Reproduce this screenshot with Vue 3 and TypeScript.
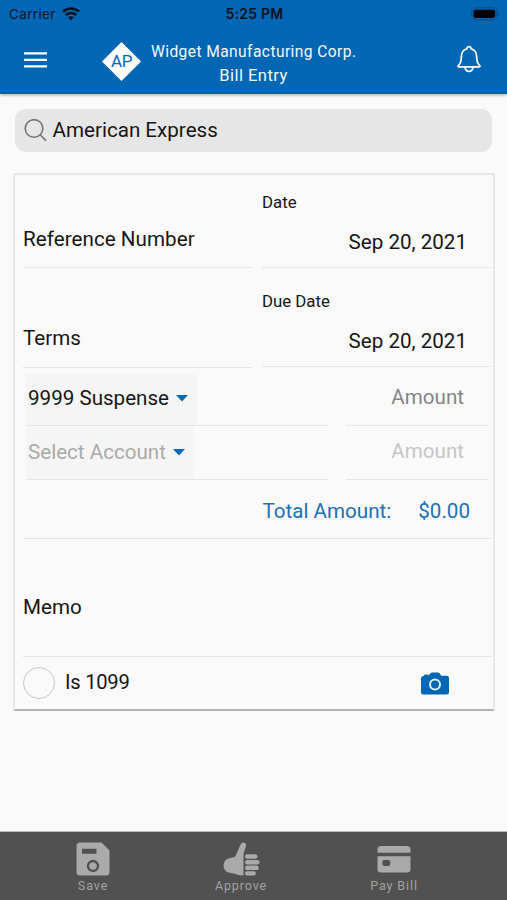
<script setup lang="ts">
import { ref } from 'vue'

interface AccountLine {
  account: string
  filled: boolean
}

const company = 'Widget Manufacturing Corp.'
const vendor = ref('American Express')
const billDate = ref('Sep 20, 2021')
const dueDate = ref('Sep 20, 2021')
const is1099 = ref(false)
const lines = ref<AccountLine[]>([
  { account: '9999 Suspense', filled: true },
  { account: 'Select Account', filled: false },
])
const total = ref('$0.00')
</script>

<template>
  <div class="screen">
    <header class="header">
      <div class="status">
        <div class="carrier">
          <span>Carrier</span>
          <svg class="wifi" width="18" height="14" viewBox="0 0 18 14">
            <path d="M1 4.600C5.400.4 12.600.4 17 4.600" />
            <path d="M3.800 8c2.900-2.700 7.500-2.700 10.400 0" />
            <path class="dot" d="M6.200 10.400c1.500-1.400 4.100-1.400 5.600 0L9 13.200z" />
          </svg>
        </div>
        <span class="clock">5:25 PM</span>
        <svg class="battery" width="29" height="14" viewBox="0 0 29 14">
          <rect class="case" x="0.8" y="0.8" width="25" height="12" rx="3.6" />
          <rect x="2.6" y="2.7" width="21.6" height="8.3" rx="2" />
          <path class="tip" d="M27.2 5v4c1.600-.7 1.600-3.300 0-4z" />
        </svg>
      </div>
      <div class="bar">
        <svg class="menu" width="23" height="16" viewBox="0 0 23 16">
          <path d="M0 1.300h23M0 7.900h23M0 14.400h23" />
        </svg>
        <div class="brand"><span>AP</span></div>
        <div class="titles">
          <div class="company">{{ company }}</div>
          <div class="page">Bill Entry</div>
        </div>
        <svg class="bell" width="26" height="28" viewBox="0 0 26 28">
          <path d="M11 3.700C11 1 15 1 15 3.700C18.800 4.700 20.500 7.600 20.600 11.300C20.700 16.500 21.400 18.600 23.500 20.400C24.300 21.200 24 21.900 23 21.900H3C2 21.900 1.700 21.200 2.500 20.400C4.600 18.600 5.300 16.500 5.400 11.300C5.500 7.600 7.200 4.700 11 3.700Z" />
          <path d="M9 22.200c.5 5.600 7.500 5.600 8 0" />
        </svg>
      </div>
    </header>

    <main class="content">
      <div class="search">
        <svg width="24" height="24" viewBox="0 0 24 24">
          <circle cx="10" cy="9.500" r="8.800" />
          <path d="M16.100 15.800l6 6" />
        </svg>
        <span>{{ vendor }}</span>
      </div>

      <section class="card">
        <div class="pair first">
          <div class="field"><span class="reference">Reference Number</span></div>
          <div class="field date">
            <label>Date</label>
            <span>{{ billDate }}</span>
          </div>
        </div>
        <div class="pair second">
          <div class="field"><span>Terms</span></div>
          <div class="field date">
            <label>Due Date</label>
            <span>{{ dueDate }}</span>
          </div>
        </div>

        <div v-for="line in lines" :key="line.account" class="line" :class="{ empty: !line.filled }">
          <div class="account">
            <div class="select">
              <span>{{ line.account }}</span>
              <svg width="12" height="7" viewBox="0 0 12 7"><path d="M0 0h12L6 6.500z" /></svg>
            </div>
          </div>
          <div class="amount"><span>Amount</span></div>
        </div>

        <div class="total">
          <span class="total-label">Total Amount:</span>
          <span class="total-value">{{ total }}</span>
        </div>
        <div class="memo"><span>Memo</span></div>
        <div class="options">
          <button class="check" :aria-pressed="is1099" @click="is1099 = !is1099"></button>
          <span class="check-label">Is 1099</span>
          <svg class="camera" width="28" height="23" viewBox="0 0 28 23">
            <path d="M2.800 3.800Q3 2.500 4.500 2.500H6.200Q7 2.500 7.300 3.400L8.400 2.500L9.500 1.200Q10.200.500 11.200.500H17Q18 .500 18.600 1.200L20.300 3.800H25.500Q28 3.800 28 6.300V20Q28 22.500 25.500 22.500H2.500Q0 22.500 0 20V6.300Q0 4.300 2.800 3.800Z" />
            <circle cx="14" cy="12.500" r="5" />
          </svg>
        </div>
      </section>
    </main>

    <footer class="footer">
      <div class="action save">
        <svg width="34" height="34" viewBox="0 0 34 34">
          <path fill-rule="evenodd" d="M4 .500H25.500L33.500 8.500V30Q33.500 33.500 30 33.500H4Q.500 33.500 .500 30V4Q.500 .500 4 .500ZM6 6.700V11.700H20.500V6.700ZM17 17.800a6.200 6.200 0 1 0 .01 0ZM17 20.200a3.800 3.800 0 1 1-.01 0Z" />
        </svg>
        <span>Save</span>
      </div>
      <div class="action approve">
        <svg width="37" height="34" viewBox="0 0 37 34">
          <path d="M9 15.500Q11.700 15.500 12.500 14L17.600 2.500Q19.200-.600 22 1.100Q23.700 2.300 22.600 5.200L20.500 12V33.500Q15 33.500 11.500 31.700L5.500 30.500Q.500 28.700 .500 23.500Q.500 16.600 9 15.500Z" />
          <rect x="22" y="12.300" width="12.500" height="4.500" rx="2.200" />
          <rect x="22" y="18" width="14.500" height="4.500" rx="2.200" />
          <rect x="22" y="23.600" width="13.700" height="4.500" rx="2.200" />
          <rect x="22" y="29.200" width="10.800" height="4.300" rx="2.100" />
        </svg>
        <span>Approve</span>
      </div>
      <div class="action pay">
        <svg width="34" height="34" viewBox="0 0 34 34">
          <path d="M.500 10.700V7.500Q.500 4 4 4H30Q33.500 4 33.500 7.500V10.700Z" />
          <path fill-rule="evenodd" d="M.500 14.300H33.500V27Q33.500 30.500 30 30.500H4Q.500 30.500 .500 27ZM7.300 18Q5.300 18 5.300 20V22Q5.300 24 7.300 24H11.300Q13.300 24 13.300 22V20Q13.300 18 11.300 18Z" />
        </svg>
        <span>Pay Bill</span>
      </div>
    </footer>
  </div>
</template>

<style>
body {
  background: #fafafa;
}
</style>

<style scoped>
.screen {
  box-sizing: border-box;
  display: flex;
  flex-direction: column;
  height: 900px;
  background: #fafafa;
  color: #161616;
  font-family: Roboto, "Liberation Sans", sans-serif;
  font-size: 20.6px;
  line-height: 24px;
  white-space: nowrap;
  overflow: hidden;
}
.header {
  height: 94px;
  flex: none;
  background: #0166b3;
  box-shadow: 0 1px 3px rgba(0, 0, 0, 0.35);
}
.status {
  display: grid;
  grid-template-columns: 1fr auto 1fr;
  align-items: center;
  height: 28px;
  padding: 0 7px 0 9px;
  color: #07182a;
  font-family: Inter, sans-serif;
  font-size: 13.5px;
}
.carrier {
  display: flex;
  align-items: center;
  gap: 6px;
  letter-spacing: 0.35px;
}
.wifi {
  fill: none;
  stroke: #07121f;
  stroke-width: 2.6;
}
.wifi .dot {
  fill: #07121f;
  stroke: none;
}
.clock {
  font-weight: 600;
  font-size: 14px;
  letter-spacing: 0.25px;
  color: #07121f;
}
.battery {
  justify-self: end;
  fill: #000;
}
.battery .case {
  fill: none;
  stroke: #064a83;
}
.battery .tip {
  fill: #064a83;
}
.bar {
  display: flex;
  height: 66px;
  padding: 0 25px 0 24px;
}
.menu {
  margin-top: 24px;
  stroke: #fff;
  stroke-width: 2.2;
}
.brand {
  display: grid;
  place-items: center;
  box-sizing: border-box;
  width: 39px;
  height: 39px;
  margin: 14px 0 0 55px;
  padding-bottom: 2px;
  background: #fff;
  clip-path: polygon(50% 0, 100% 50%, 50% 100%, 0 50%);
  color: #0166b3;
  font-size: 17px;
  line-height: 20px;
  letter-spacing: -0.4px;
}
.titles {
  width: 205px;
  margin: 12px 0 0 10px;
  color: #f2f8fd;
  text-align: center;
}
.company {
  font-size: 15.6px;
  letter-spacing: 0.4px;
}
.page {
  font-size: 16.6px;
  letter-spacing: 0.42px;
}
.bell {
  margin: 17px 0 0 auto;
  fill: none;
  stroke: #fff;
  stroke-width: 1.7;
}
.content {
  flex: 1;
  padding: 15px 12px 0 13px;
}
.search {
  display: flex;
  align-items: center;
  gap: 4.5px;
  height: 43px;
  margin: 0 3px 0 2px;
  padding-left: 9px;
  border-radius: 11px;
  background: #e6e6e6;
}
.search span {
  margin-bottom: 2px;
}
.search svg {
  fill: none;
  stroke: #747474;
  stroke-width: 1.6;
}
.card {
  box-sizing: border-box;
  height: 538px;
  margin-top: 21px;
  border: 2px solid #e8e8e8;
  border-bottom-color: #b3b3b3;
  border-radius: 2px;
}
.pair {
  display: grid;
  grid-template-columns: 229px 229px;
  gap: 10px;
  padding-left: 8px;
}
.field {
  box-sizing: border-box;
  border-bottom: 1px solid #e5e5e5;
}
.reference {
  letter-spacing: 0.05px;
}
.first .field {
  height: 93px;
  padding-top: 52px;
}
.second .field {
  height: 100px;
  padding-top: 58px;
}
.first .date {
  padding-top: 15px;
}
.second .date {
  height: 99px;
  padding-top: 21px;
}
.date label {
  display: block;
  font-size: 16.8px;
}
.date span {
  display: block;
  margin-top: 16px;
  padding-right: 24px;
  text-align: right;
}
.line {
  display: grid;
  grid-template-columns: 302px 142px;
  gap: 18px;
  height: 54px;
  padding-left: 11px;
}
.second + .line {
  height: 58px;
}
.account,
.amount {
  box-sizing: border-box;
  border-bottom: 1px solid #e5e5e5;
}
.account {
  display: flex;
  align-items: flex-end;
}
.select {
  box-sizing: border-box;
  display: flex;
  align-items: center;
  gap: 7px;
  height: 51px;
  padding: 0 9px 2px 2px;
  background: #f5f5f5;
}
.select span {
  margin-bottom: 2px;
}
.empty .select {
  height: 53px;
  padding-bottom: 0;
  color: #aaa;
}
.select svg {
  fill: #0868b2;
}
.amount {
  display: flex;
  align-items: flex-end;
  justify-content: flex-end;
  padding: 0 24px 16px 0;
  color: #858585;
}
.empty .amount {
  color: #c6c6c6;
}
.total {
  box-sizing: border-box;
  display: flex;
  height: 59px;
  margin: 0 2px 0 8px;
  padding: 19px 21px 0 239.5px;
  justify-content: space-between;
  border-bottom: 1px solid #e5e5e5;
  color: #1c6fb7;
}
.memo {
  box-sizing: border-box;
  height: 118px;
  margin: 0 2px 0 8px;
  padding-top: 56px;
  border-bottom: 1px solid #e5e5e5;
}
.options {
  display: flex;
  align-items: center;
  height: 52px;
  padding: 0 44.500px 0 8px;
}
.check {
  box-sizing: border-box;
  width: 32px;
  height: 32px;
  padding: 0;
  border: 1.5px solid #c8c8c8;
  border-radius: 50%;
  background: transparent;
}
.check-label {
  margin: 0 0 2px 10px;
  font-size: 20.2px;
  letter-spacing: -0.25px;
}
.camera {
  margin-left: auto;
  fill: #0166b3;
}
.camera circle {
  stroke: #e2f0fa;
  stroke-width: 2;
}
.footer {
  box-sizing: border-box;
  display: flex;
  height: 69px;
  flex: none;
  border-top: 1px solid #b8b8b8;
  background: #515151;
  color: #a2a2a2;
}
.action {
  display: flex;
  flex-direction: column;
  align-items: center;
  width: 100px;
  padding-top: 10px;
  font-size: 12.5px;
  line-height: 20px;
  letter-spacing: 0.9px;
}
.action svg {
  fill: #aaa;
}
.save {
  margin-left: 43px;
}
.approve {
  margin-left: 48px;
}
.pay {
  margin-left: 53px;
}
</style>
